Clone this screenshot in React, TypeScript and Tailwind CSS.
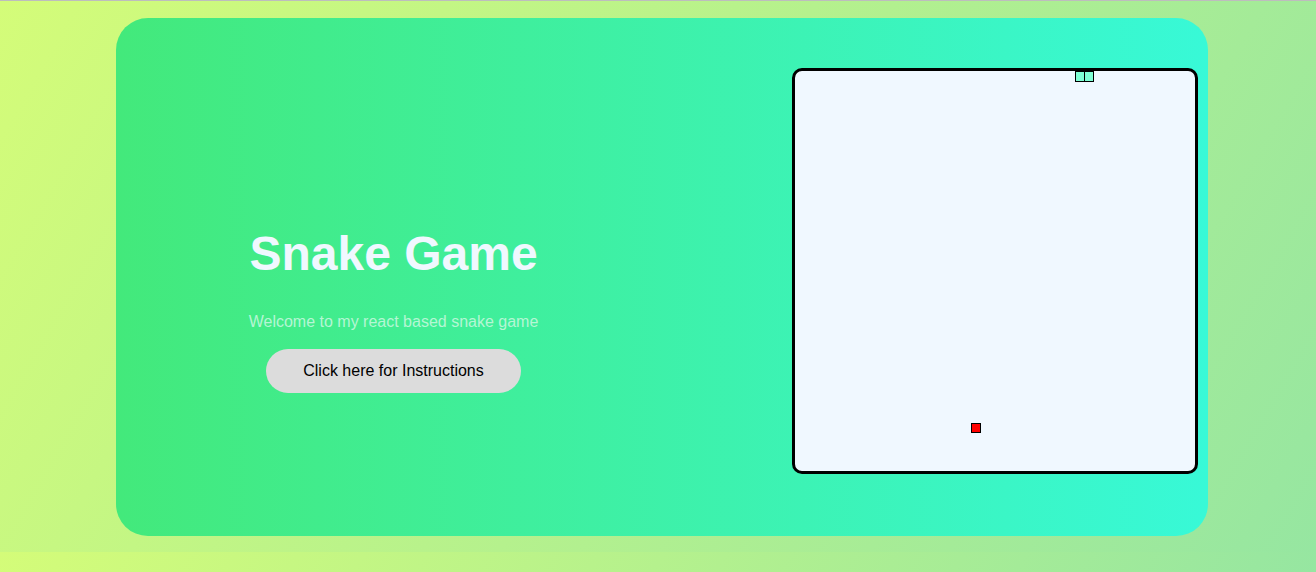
export default function App() {
  return (
    <div className="w-[1316px] h-[572px] overflow-hidden font-['Liberation_Sans',Arial,sans-serif]">
      <div className="h-[552px] border-t border-[#bdbdbd] bg-[linear-gradient(120deg,#d4fc79_0%,#96e6a1_100%)] pt-[17px] pl-[116px]">
        <div className="w-[1092px] h-[518px] rounded-[32px] bg-[linear-gradient(to_right,#43e97b,#38f9d7)] flex items-start">
          <div className="w-[555px] flex flex-col items-center pt-[208px]">
            <h1 className="text-[48px] leading-[56px] font-bold text-[#f0f8ff]">Snake Game</h1>
            <p className="mt-[28px] text-[16px] leading-[24px] text-[#b5f6d4]">Welcome to my react based snake game</p>
            <button className="mt-[15px] w-[255px] h-[44px] rounded-full bg-[#dcdcdc] text-[16px] text-black">
              Click here for Instructions
            </button>
          </div>
          <div className="ml-auto mr-[10px] mt-[50px] w-[406px] h-[406px] rounded-[10px] border-[3px] border-black bg-[#f0f8ff] relative">
            <div className="absolute left-[280px] top-0 w-[10px] h-[11px] bg-[#7fffd4] border border-black" />
            <div className="absolute left-[289px] top-0 w-[10px] h-[11px] bg-[#7fffd4] border border-black" />
            <div className="absolute left-[176px] top-[352px] w-[10px] h-[10px] bg-[#ff0000] border border-black" />
          </div>
        </div>
      </div>
      <div className="h-[20px] bg-[linear-gradient(120deg,#d4fc79_0%,#96e6a1_100%)]" />
    </div>
  );
}
